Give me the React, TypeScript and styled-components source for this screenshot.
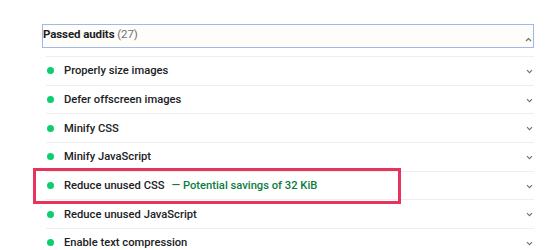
import React from "react";
import styled, { createGlobalStyle } from "styled-components";

const Global = createGlobalStyle`
  html, body { margin: 0; padding: 0; background: #ffffff; }
  body { font-family: Roboto, "Noto Sans", Arial, sans-serif; -webkit-font-smoothing: antialiased; }
`;

const Page = styled.div`
  position: relative;
  width: 550px;
  height: 250px;
  overflow: hidden;
  padding: 24px 0 0 42px;
  box-sizing: border-box;
`;

const Section = styled.div`
  width: 492px;
  display: flex;
  flex-direction: column;
`;

const Header = styled.div`
  height: 24px;
  box-sizing: border-box;
  border: 1px solid #9fb9ea;
  background: #fffdfa;
  display: flex;
  align-items: flex-start;
  justify-content: space-between;
  padding: 2px 0 0 0;
  margin-bottom: 8px;
`;

const Title = styled.span`
  font-size: 11.5px;
  font-weight: 700;
  color: #202124;
  line-height: 14px;
  letter-spacing: -0.1px;
`;

const Count = styled.span`
  font-weight: 400;
  color: #707070;
`;

const List = styled.div`
  display: flex;
  flex-direction: column;
  margin-left: 4px;
`;

const Row = styled.div`
  height: 28.7px;
  box-sizing: border-box;
  border-top: 1px solid #eeeeee;
  display: flex;
  align-items: center;
  padding: 0 1px 0 1px;
`;

const Dot = styled.span`
  width: 7px;
  height: 7px;
  border-radius: 50%;
  background: #0cce6b;
  flex: none;
  margin-right: 10px;
`;

const Label = styled.span`
  flex: 1;
  font-size: 11.2px;
  font-weight: 500;
  color: #202124;
  white-space: nowrap;
`;

const Savings = styled.span`
  color: #0a7d3e;
  margin-left: 7px;
`;

const ChevronBox = styled.span<{ $top?: boolean }>`
  display: flex;
  width: 8px;
  height: 8px;
  align-items: center;
  justify-content: center;
  flex: none;
  margin-top: ${(p) => (p.$top ? "8px" : "1px")};
  margin-right: ${(p) => (p.$top ? "1px" : "0")};
`;

const Highlight = styled.div`
  position: absolute;
  left: 33px;
  top: 168px;
  width: 368px;
  height: 36px;
  box-sizing: border-box;
  border: 3px solid #e8335f;
  pointer-events: none;
`;

const Chevron = ({ up }: { up?: boolean }) => (
  <svg width="7" height="5" viewBox="0 0 7 5">
    <path
      d={up ? "M1 4 L3.5 1.5 L6 4" : "M1 1.2 L3.5 3.7 L6 1.2"}
      fill="none"
      stroke="#6f6f6f"
      strokeWidth="1.1"
    />
  </svg>
);

const audits: { label: string; savings?: string }[] = [
  { label: "Properly size images" },
  { label: "Defer offscreen images" },
  { label: "Minify CSS" },
  { label: "Minify JavaScript" },
  { label: "Reduce unused CSS", savings: "— Potential savings of 32 KiB" },
  { label: "Reduce unused JavaScript" },
  { label: "Enable text compression" },
];

export default function App() {
  return (
    <>
      <Global />
      <Page>
        <Section>
          <Header>
            <Title>
              Passed audits <Count>(27)</Count>
            </Title>
            <ChevronBox $top>
              <Chevron up />
            </ChevronBox>
          </Header>
          <List>
            {audits.map((a) => (
              <Row key={a.label}>
                <Dot />
                <Label>
                  {a.label}
                  {a.savings && <Savings>{a.savings}</Savings>}
                </Label>
                <ChevronBox>
                  <Chevron />
                </ChevronBox>
              </Row>
            ))}
          </List>
        </Section>
        <Highlight />
      </Page>
    </>
  );
}
